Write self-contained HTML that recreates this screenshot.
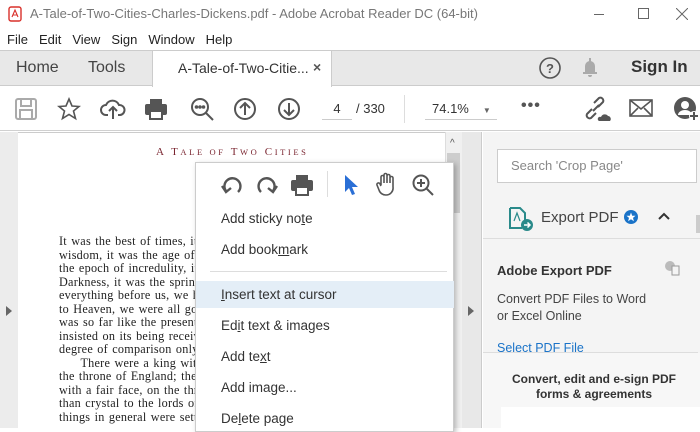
<!DOCTYPE html>
<html><head><style>
*{margin:0;padding:0;box-sizing:border-box}
body{width:700px;height:428px;overflow:hidden;position:relative;background:#fff;font-family:"Liberation Sans",sans-serif;color:#333}
.a{position:absolute}
.menu span{margin-right:11px}
.pg{font-family:"Liberation Serif",serif;font-size:12.2px;line-height:13.5px;color:#222;white-space:nowrap;letter-spacing:0.25px;word-spacing:1px}
.cm div{position:absolute;left:25px;font-size:13.5px;color:#333}
</style></head><body>
<!-- title bar -->
<svg class="a" style="left:8px;top:6px" width="14" height="16"><rect x="1" y="1" width="12" height="14" rx="2" fill="#fff" stroke="#d9302a" stroke-width="1.4"/><path d="M4 11 L7 4 L10 11 M5 9 h4" stroke="#d9302a" fill="none" stroke-width="1.1"/></svg>
<div class="a" style="left:30px;top:6px;font-size:13px;color:#777">A-Tale-of-Two-Cities-Charles-Dickens.pdf - Adobe Acrobat Reader DC (64-bit)</div>
<div class="a" style="left:594px;top:14px;width:10px;height:1px;background:#666"></div>
<div class="a" style="left:638px;top:8px;width:11px;height:11px;border:1px solid #666"></div>
<svg class="a" style="left:676px;top:8px" width="12" height="12" stroke="#666" stroke-width="1"><path d="M0 0 L12 12 M12 0 L0 12"/></svg>
<!-- menu -->
<div class="a menu" style="left:0;top:28px;width:700px;height:22px;background:#fff;font-size:13px;padding:4px 7px;color:#222"><span>File</span><span>Edit</span><span>View</span><span>Sign</span><span>Window</span><span>Help</span></div>
<!-- tabs -->
<div class="a" style="left:0;top:50px;width:700px;height:36px;background:#e8e8e8;border-top:1px solid #ccc;border-bottom:1px solid #ccc"></div>
<div class="a" style="left:16px;top:59px;font-size:16px;color:#444">Home</div>
<div class="a" style="left:88px;top:59px;font-size:16px;color:#444">Tools</div>
<div class="a" style="left:152px;top:50px;width:180px;height:37px;background:#fff;border:1px solid #ccc;border-bottom:none"></div>
<div class="a" style="left:178px;top:60px;font-size:14px;color:#333">A-Tale-of-Two-Citie...</div>
<div class="a" style="left:313px;top:59px;font-size:14px;color:#555;font-weight:bold">×</div>
<svg class="a" style="left:538px;top:56px" width="24" height="24"><circle cx="12" cy="12" r="10" fill="none" stroke="#555" stroke-width="1.6"/><text x="12" y="17" text-anchor="middle" font-size="13" font-weight="bold" fill="#555" font-family="Liberation Sans">?</text></svg>
<svg class="a" style="left:582px;top:57px" width="16" height="22"><path d="M3 15 V9 a5 5 0 0 1 10 0 V15 H15 V17 H1 V15Z M6 18 h4 a2 2 0 0 1 -4 0" fill="#aaa"/><rect x="7" y="1" width="2" height="4" fill="#aaa"/></svg>
<div class="a" style="left:631px;top:57px;font-size:17px;color:#333;font-weight:bold">Sign In</div>
<!-- toolbar -->
<div class="a" style="left:0;top:87px;width:700px;height:44px;background:#fff;border-bottom:1px solid #d0d0d0"></div>
<svg class="a" style="left:14px;top:97px" width="24" height="24" fill="none" stroke="#aaa" stroke-width="2"><rect x="2" y="2" width="20" height="20" rx="2"/><rect x="7" y="2" width="10" height="7"/><rect x="6" y="13" width="12" height="9"/></svg>
<svg class="a" style="left:57px;top:97px" width="24" height="24" fill="none" stroke="#555" stroke-width="1.6"><path d="M12 2 L15 9 L22 9.5 L16.5 14 L18.5 21.5 L12 17.5 L5.5 21.5 L7.5 14 L2 9.5 L9 9Z"/></svg>
<svg class="a" style="left:100px;top:97px" width="26" height="24" fill="none" stroke="#555" stroke-width="2"><path d="M8 18 H6 a5 5 0 0 1 0-10 a7 7 0 0 1 13 0 a5 5 0 0 1 1 10 H18 M13 22 V11 M9 14 L13 10 L17 14"/></svg>
<svg class="a" style="left:144px;top:97px" width="24" height="24"><rect x="6" y="2" width="12" height="5" fill="#555"/><rect x="1" y="7" width="22" height="11" rx="2" fill="#555"/><rect x="6" y="14" width="12" height="8" fill="#fff" stroke="#555" stroke-width="2"/></svg>
<svg class="a" style="left:189px;top:96px" width="26" height="26" fill="none" stroke="#555" stroke-width="2"><circle cx="11" cy="11" r="8"/><path d="M17 17 L24 24"/><circle cx="7.5" cy="11" r=".8" fill="#555"/><circle cx="11" cy="11" r=".8" fill="#555"/><circle cx="14.5" cy="11" r=".8" fill="#555"/></svg>
<svg class="a" style="left:233px;top:97px" width="24" height="24" fill="none" stroke="#555" stroke-width="2"><circle cx="12" cy="12" r="10"/><path d="M12 18 V6 M7 11 L12 6 L17 11"/></svg>
<svg class="a" style="left:277px;top:97px" width="24" height="24" fill="none" stroke="#555" stroke-width="2"><circle cx="12" cy="12" r="10"/><path d="M12 6 V18 M7 13 L12 18 L17 13"/></svg>
<div class="a" style="left:322px;top:101px;width:30px;font-size:13px;color:#333;text-align:center;border-bottom:1px solid #ccc;padding-bottom:3px">4</div>
<div class="a" style="left:356px;top:101px;font-size:13px;color:#333">/ 330</div>
<div class="a" style="left:404px;top:95px;width:1px;height:28px;background:#ddd"></div>
<div class="a" style="left:425px;top:101px;width:72px;font-size:13px;color:#333;border-bottom:1px solid #ccc;padding:0 0 3px 7px">74.1%<span style="font-size:8px;color:#666;margin-left:14px">▼</span></div>
<div class="a" style="left:521px;top:97px;font-size:16px;color:#555;font-weight:bold;letter-spacing:1px">•••</div>
<svg class="a" style="left:583px;top:96px" width="28" height="26" fill="none" stroke="#555" stroke-width="2"><path d="M9 13 L4 18 a3 3 0 0 0 4 4 L13 17 M15 11 L20 6 a3 3 0 0 0 -4 -4 L11 7 M10 15 L16 9"/><path d="M16 25 h11 a3 3 0 0 0 -2 -5 a4 4 0 0 0 -7 1 a2 2 0 0 0 -2 4Z" fill="#555" stroke="none"/></svg>
<svg class="a" style="left:629px;top:99px" width="24" height="18" fill="none" stroke="#555" stroke-width="1.6"><rect x="1" y="1" width="22" height="16"/><path d="M1 1 L12 10 L23 1 M1 17 L9 9 M23 17 L15 9"/></svg>
<svg class="a" style="left:672px;top:95px" width="28" height="28"><circle cx="13" cy="13" r="11" fill="#555"/><circle cx="13" cy="10" r="4" fill="#fff"/><path d="M6 20 a7 5 0 0 1 14 0" fill="#fff"/><circle cx="22" cy="21" r="5" fill="#fff"/><path d="M22 17 V25 M18 21 H26" stroke="#555" stroke-width="2"/></svg>
<!-- main -->
<div class="a" style="left:0;top:132px;width:18px;height:296px;background:#ececec"></div>
<div class="a" style="left:6px;top:306px;width:0;height:0;border-left:6px solid #666;border-top:5px solid transparent;border-bottom:5px solid transparent"></div>
<div class="a" style="left:445px;top:132px;width:17px;height:296px;background:#f0f0f0;border-left:1px solid #ddd"></div>
<div class="a" style="left:450px;top:138px;font-size:10px;color:#555">^</div>
<div class="a" style="left:447px;top:153px;width:13px;height:60px;background:#cdcdcd"></div>
<div class="a" style="left:462px;top:132px;width:20px;height:296px;background:#e8e8e8;border-right:1px solid #ccc"></div>
<div class="a" style="left:468px;top:306px;width:0;height:0;border-left:6px solid #666;border-top:5px solid transparent;border-bottom:5px solid transparent"></div>
<div class="a" style="left:18px;top:132px;width:427px;height:1px;background:#ccc"></div>
<div class="a" style="left:156px;top:146px;font-family:'Liberation Serif',serif;font-size:11px;letter-spacing:2.6px;color:#7a2530">A T<span style="font-size:8.5px">ALE OF</span> T<span style="font-size:8.5px">WO</span> C<span style="font-size:8.5px">ITIES</span></div>
<div class="a pg" style="left:59px;top:235px">It was the best of times, it<br>wisdom, it was the age of fo<br>the epoch of incredulity, it w<br>Darkness, it was the spring o<br>everything before us, we had<br>to Heaven, we were all goin<br>was so far like the present p<br>insisted on its being receive<br>degree of comparison only.|<br>&nbsp;&nbsp;&nbsp;&nbsp;&nbsp;There were a king with a<br>the throne of England; there<br>with a fair face, on the thron<br>than crystal to the lords of t<br>things in general were settle</div>
<!-- context menu -->
<div class="a cm" style="left:195px;top:162px;width:259px;height:270px;background:#fff;border:1px solid #ccc;box-shadow:2px 2px 5px rgba(0,0,0,.25)">
<svg class="a" style="left:24px;top:10px" width="24" height="24" fill="none" stroke="#555" stroke-width="2.4"><path d="M6 18 A8 8 0 1 1 18 19"/><path d="M2 13 L6 19 L11 15"/></svg>
<svg class="a" style="left:59px;top:10px" width="24" height="24" fill="none" stroke="#555" stroke-width="2.4"><path d="M18 18 A8 8 0 1 0 6 19"/><path d="M22 13 L18 19 L13 15"/></svg>
<svg class="a" style="left:94px;top:10px" width="24" height="24"><rect x="6" y="2" width="12" height="5" fill="#555"/><rect x="1" y="7" width="22" height="11" rx="2" fill="#555"/><rect x="6" y="14" width="12" height="8" fill="#fff" stroke="#555" stroke-width="2"/></svg>
<span class="a" style="left:131px;top:8px;width:1px;height:26px;background:#ddd"></span>
<svg class="a" style="left:146px;top:10px" width="20" height="24"><path d="M3 2 L16 14 L10 14 L13 21 L10 22 L7 15 L3 19Z" fill="#2a6fd6"/></svg>
<svg class="a" style="left:179px;top:8px" width="24" height="26" fill="none" stroke="#555" stroke-width="1.6"><path d="M6 14 V6 a1.5 1.5 0 0 1 3 0 V12 M9 12 V4 a1.5 1.5 0 0 1 3 0 V12 M12 12 V5 a1.5 1.5 0 0 1 3 0 V12 M15 12 V7 a1.5 1.5 0 0 1 3 0 V16 a7 7 0 0 1 -7 8 a7 7 0 0 1 -7 -5 L2 14 a1.5 1.5 0 0 1 3 -1 L6 15"/></svg>
<svg class="a" style="left:215px;top:10px" width="24" height="24" fill="none" stroke="#555" stroke-width="2"><circle cx="10" cy="10" r="7.5"/><path d="M15.5 15.5 L22 22 M10 6 V14 M6 10 H14"/></svg>
<div style="top:48px">Add sticky no<u>t</u>e</div>
<div style="top:79px">Add book<u>m</u>ark</div>
<span class="a" style="left:14px;top:108px;width:237px;height:1px;background:#ddd"></span>
<span class="a" style="left:0;top:118px;width:258px;height:27px;background:#e4eef7"></span>
<div style="top:124px"><u>I</u>nsert text at cursor</div>
<div style="top:155px">Ed<u>i</u>t text &amp; images</div>
<div style="top:186px">Add te<u>x</u>t</div>
<div style="top:217px">Add ima<u>g</u>e...</div>
<div style="top:248px">De<u>l</u>ete page</div>
</div>
<!-- right panel -->
<div class="a" style="left:483px;top:132px;width:217px;height:296px;background:#f4f4f4"></div>
<div class="a" style="left:497px;top:149px;width:200px;height:34px;background:#fff;border:1px solid #ccc;font-size:13px;color:#888;padding:8px 0 0 13px">Search 'Crop Page'</div>
<svg class="a" style="left:508px;top:206px" width="26" height="26"><path d="M2 2 H12 L17 7 V16 M14 22 H2 V2" fill="none" stroke="#2a8a8a" stroke-width="2"/><path d="M6 15 L9 7 L12 15" fill="none" stroke="#2a8a8a" stroke-width="1.2"/><circle cx="19" cy="19" r="6" fill="#2a8a8a"/><path d="M16 19 H22 M19.5 16.5 L22 19 L19.5 21.5" stroke="#fff" stroke-width="1.5" fill="none"/></svg>
<div class="a" style="left:541px;top:209px;font-size:15px;color:#444">Export PDF</div>
<svg class="a" style="left:624px;top:210px" width="14" height="14"><circle cx="7" cy="7" r="7" fill="#1a73c8"/><path d="M7 2.5 L8.2 5.7 L11.5 5.8 L9 7.9 L9.9 11.2 L7 9.3 L4.1 11.2 L5 7.9 L2.5 5.8 L5.8 5.7Z" fill="#fff"/></svg>
<svg class="a" style="left:658px;top:212px" width="12" height="8" fill="none" stroke="#333" stroke-width="2"><path d="M1 7 L6 2 L11 7"/></svg>
<div class="a" style="left:696px;top:215px;width:4px;height:18px;background:#ccc"></div>
<div class="a" style="left:483px;top:238px;width:217px;height:1px;background:#ddd"></div>
<div class="a" style="left:497px;top:263px;font-size:13px;font-weight:bold;color:#333">Adobe Export PDF</div>
<svg class="a" style="left:664px;top:260px" width="16" height="16"><circle cx="6" cy="6" r="5" fill="#bbb"/><rect x="8" y="6" width="7" height="9" fill="#f4f4f4" stroke="#999"/></svg>
<div class="a" style="left:497px;top:291px;font-size:12.5px;line-height:17px;color:#444">Convert PDF Files to Word<br>or Excel Online</div>
<div class="a" style="left:497px;top:340px;width:200px;height:12px;overflow:hidden;font-size:12.5px;color:#1a73c8;line-height:17px">Select PDF File</div>
<div class="a" style="left:483px;top:352px;width:215px;height:1px;background:#ddd"></div>
<div class="a" style="left:483px;top:353px;width:217px;height:75px;background:#f7f7f7"></div>
<div class="a" style="left:490px;top:372px;width:208px;text-align:center;font-size:12px;font-weight:bold;line-height:15px;color:#333">Convert, edit and e-sign PDF<br>forms &amp; agreements</div>
<div class="a" style="left:501px;top:407px;width:199px;height:21px;background:#fff"></div>
</body></html>
